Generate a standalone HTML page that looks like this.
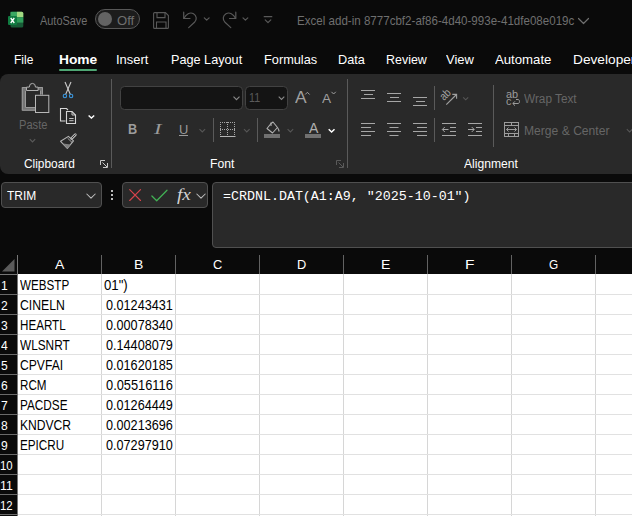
<!DOCTYPE html>
<html><head><meta charset="utf-8">
<style>
*{box-sizing:border-box;margin:0;padding:0}
html,body{width:632px;height:516px;overflow:hidden;background:#0a0a0a;font-family:"Liberation Sans",sans-serif}
#app{position:relative;width:632px;height:516px;overflow:hidden;background:#0a0a0a;color:#fff}
.a{position:absolute}
.t{position:absolute;white-space:pre;line-height:1;transform-origin:0 0}
svg{position:absolute;overflow:visible}
.sep{position:absolute;width:1px;background:#5a5a5a}
.hl{position:absolute;height:1px;left:0}
.vl{position:absolute;width:1px}
</style></head><body><div id="app">

<!-- ===== TITLE BAR ===== -->
<svg style="left:8px;top:11px" width="16" height="17" viewBox="0 0 16 17">
  <rect x="2.500" y="0.800" width="12.800" height="15.800" rx="1.500" fill="#185c37"/>
  <rect x="2.500" y="0.800" width="6.400" height="5.500" fill="#3aa862"/>
  <path d="M8.900 0.800h4.900a1.500 1.500 0 0 1 1.500 1.500V6.300h-6.400z" fill="#a3da82"/>
  <rect x="8.900" y="6.300" width="6.400" height="5.300" fill="#2f9e5a"/>
  <rect x="2.500" y="6.300" width="6.400" height="5.300" fill="#107c41"/>
  <rect x="0" y="5" width="9" height="9" rx="1" fill="#107c41"/>
  <path d="M2.700 7l3.600 5M6.300 7l-3.600 5" stroke="#fff" stroke-width="1.300"/>
</svg>
<div class="a" style="left:95px;top:9px;width:45px;height:20px;border:1px solid #585858;border-radius:10px;background:#1c1c1c"></div>
<div class="a" style="left:98px;top:12px;width:14px;height:14px;border-radius:7px;background:#636363"></div>
<!-- save -->
<svg style="left:153px;top:11.500px" width="17" height="17" viewBox="0 0 17 17" fill="none" stroke="#595959" stroke-width="1.1">
  <path d="M0.600 1.600a1 1 0 0 1 1-1h10.800l3 3v11.800a1 1 0 0 1-1 1H1.600a1 1 0 0 1-1-1z"/><path d="M4 0.600v5h8v-5"/><path d="M3.500 16.400v-6.400h9.500v6.400"/>
</svg>
<!-- undo -->
<svg style="left:183px;top:10px" width="28" height="19" viewBox="0 0 28 19" fill="none" stroke="#595959" stroke-width="1.2" stroke-linecap="round" stroke-linejoin="round">
  <path d="M0.700 2.200v6.300h6.300"/><path d="M1 8.200C3 4 7 1.800 10.500 3.700c3.300 1.900 3.600 6 1 8.600L5.700 17.600"/>
  <path d="M21.300 7.800l2.400 2.400 2.400-2.400"/>
</svg>
<!-- redo -->
<svg style="left:222px;top:10px" width="28" height="19" viewBox="0 0 28 19" fill="none" stroke="#595959" stroke-width="1.2" stroke-linecap="round" stroke-linejoin="round">
  <path d="M13.800 2.200v6.300H7.500"/><path d="M13.500 8.200C11.500 4 7.500 1.800 4 3.700c-3.300 1.900-3.600 6-1 8.600l5.800 5.300"/>
  <path d="M21 7.800l2.400 2.400 2.400-2.400"/>
</svg>
<!-- customize -->
<svg style="left:263px;top:15px" width="10" height="9" viewBox="0 0 10 9" fill="none" stroke="#595959" stroke-width="1.2" stroke-linecap="round" stroke-linejoin="round">
  <path d="M1.200 1.700h7.600"/><path d="M2.200 4.800l2.800 2.800 2.800-2.800"/>
</svg>
<svg style="left:576.500px;top:16.500px" width="13" height="8" viewBox="0 0 13 8" fill="none" stroke="#6f6f6f" stroke-width="1.2" stroke-linecap="round" stroke-linejoin="round"><path d="M1.500 1.500l5 5 5-5"/></svg>

<!-- ===== TABS ===== -->
<div class="a" style="left:59px;top:69px;width:38px;height:2px;background:#4fa774;border-radius:1px"></div>

<!-- ===== RIBBON ===== -->
<div class="a" style="left:0;top:74px;width:650px;height:100px;background:#292929;border-radius:8px 0 0 8px"></div>
<div class="sep" style="left:111px;top:79px;height:89px"></div>
<div class="sep" style="left:347px;top:79px;height:89px"></div>
<div class="sep" style="left:213px;top:118px;height:24px"></div>
<div class="sep" style="left:257px;top:118px;height:24px"></div>
<div class="sep" style="left:434px;top:86px;height:24px"></div>
<div class="sep" style="left:434px;top:118px;height:24px"></div>
<div class="sep" style="left:493px;top:85px;height:62px"></div>
<svg style="left:0;top:0" width="632" height="516" viewBox="0 0 632 516" fill="none" stroke-linecap="butt">
<!-- paste clipboard -->
<path d="M21.800 87H26.500V90.300H25.300V107.600H35V110.700H21.800z" fill="#757575"/>
<path d="M38 87H43V94.500H40.300V90.300H38z" fill="#757575"/>
<path d="M26.500 87.500H22.300V110.200H35M25.500 90.500V107.500H35M38 87.500H42.500V94.500M40.500 90.500V94.500" stroke="#9a9a9a" stroke-width="1"/>
<path d="M26.500 90.500V87.100H29.300A3.100 3.700 0 0 1 35.500 87.100H38.100V90.500z" fill="#2b2b2b" stroke="#b0b0b0" stroke-width="1"/>
<rect x="35.500" y="95.300" width="13.300" height="17.200" fill="#292929" stroke="#b8b8b8"/>
<path d="M29.800 139.200l2.700 2.700 2.700-2.700" stroke="#5a5a5a" stroke-width="1.200"/>
<!-- scissors -->
<g stroke="#c8c8c8" stroke-width="1.100">
  <path d="M65 82L70.300 94.300"/><path d="M71 82L65.700 94.300"/>
</g>
<circle cx="64.900" cy="96" r="1.700" stroke="#3a96dd" stroke-width="1.100"/>
<circle cx="71.100" cy="96" r="1.700" stroke="#3a96dd" stroke-width="1.100"/>
<!-- copy -->
<g stroke="#d6d6d6" stroke-width="1.100">
  <path d="M65.500 121H60.500V108.500H66.500L68 110"/>
  <path d="M66.500 111.500H72L75.500 115V123.500H66.500z"/>
  <path d="M72 111.500V115H75.500" stroke-width="0.900"/>
  <path d="M69.200 118.500H73.600M69.200 120.700H73.600" stroke-width="0.900"/>
</g>
<path d="M88.600 115.400l2.800 2.600 2.800-2.600" stroke="#ffffff" stroke-width="1.400"/>
<!-- format painter -->
<path d="M75.300 134.700L71.600 138.400" stroke="#b4b4b4" stroke-width="2.800" stroke-linecap="round"/>
<path d="M75.300 134.700L71.900 138.100" stroke="#292929" stroke-width="0.900" stroke-linecap="round"/>
<g stroke="#b4b4b4" stroke-width="1.100" stroke-linejoin="round">
  <path d="M68.400 136.400L60.600 141.300L67.300 148.400L73.500 140.900z"/>
  <path d="M62.800 143.600L67.300 148.400L70.600 144.400z" fill="#808080" stroke="none"/>
  <path d="M67.600 138.200L72 142.400" stroke-width="0.900"/>
</g>
<!-- launchers -->
<g stroke="#c8c8c8" stroke-width="1">
  <path d="M100.500 165V160.500H105"/><path d="M102.500 162.500L107 167M107.500 163V167.500H103"/>
</g>
<g stroke="#5a5a5a" stroke-width="1">
  <path d="M336.500 165V160.500H341"/><path d="M338.500 162.500L343 167M343.500 163V167.500H339"/>
</g>
<!-- font boxes -->
<rect x="120.500" y="86.500" width="122" height="23" rx="4" fill="#141414" stroke="#424242"/>
<rect x="245.500" y="86.500" width="42" height="23" rx="4" fill="#141414" stroke="#424242"/>
<path d="M233.500 96.700l3 3 3-3" stroke="#8a8a8a" stroke-width="1.100"/>
<path d="M278.700 96.700l2.800 2.800 2.800-2.800" stroke="#8a8a8a" stroke-width="1.100"/>
<!-- grow/shrink carets -->
<path d="M305.200 94.500l2.200-2.200 2.200 2.200" stroke="#a0a0a0" stroke-width="1"/>
<path d="M331.400 91.800l2.200 2.200 2.200-2.200" stroke="#a0a0a0" stroke-width="1"/>
<!-- U underline + chevrons -->
<path d="M179 135.500H188" stroke="#9a9a9a" stroke-width="1"/>
<path d="M199.500 129.200l2.800 2.800 2.800-2.800" stroke="#565656" stroke-width="1.100"/>
<!-- borders -->
<g stroke="#a8a8a8" stroke-width="1" stroke-dasharray="1 1">
  <path d="M220.500 122V135"/><path d="M227.500 122V135"/><path d="M234.500 122V135"/>
  <path d="M220 122.500H235"/><path d="M220 129.500H235"/>
</g>
<path d="M220 136.500H235.500" stroke="#b4b4b4" stroke-width="1"/>
<path d="M244 129.200l2.800 2.800 2.800-2.800" stroke="#565656" stroke-width="1.100"/>
<!-- fill bucket -->
<g stroke="#b0b0b0" stroke-width="1.100" stroke-linejoin="round">
  <path d="M271 123.500L267 128.500L272.500 133L277.500 127.500L273 122z"/>
  <path d="M271 126V122.500"/>
  <path d="M277.500 127.500C278.500 129 279 130 279 131.500"/>
</g>
<rect x="264" y="134" width="16" height="4" fill="#707070"/>
<path d="M287.600 129.200l2.800 2.800 2.800-2.800" stroke="#565656" stroke-width="1.100"/>
<rect x="305" y="134" width="16" height="4" fill="#707070"/>
<path d="M328.700 129.200l2.900 2.800 2.900-2.800" stroke="#ffffff" stroke-width="1.500"/>
<!-- alignment icons -->
<g stroke="#a6a6a6" stroke-width="1">
  <path d="M361 90.500H375M364 94.500H373M361 98.500H375"/>
  <path d="M387 93.500H401M390 97.500H399M387 101.500H401"/>
  <path d="M413 97.500H427M416 101.500H425M413 105.500H427"/>
  <path d="M361 123.500H375M361 127.500H371M361 131.500H375M361 135.500H371"/>
  <path d="M387 123.500H401M389.500 127.500H398.500M387 131.500H401M389.500 135.500H398.500"/>
  <path d="M413 123.500H427M417 127.500H427M413 131.500H427M417 135.500H427"/>
  <path d="M442 123.500H456M450 127.500H456M450 131.500H456M442 135.500H456"/>
  <path d="M442.500 129.500H448.500M444.800 127L442.300 129.500L444.800 132"/>
  <path d="M468 123.500H482M476 127.500H482M476 131.500H482M468 135.500H482"/>
  <path d="M468 129.500H474M471.700 127L474.200 129.500L471.700 132"/>
</g>
<!-- orientation -->
<g stroke="#a0a0a0" stroke-width="1.100">
  <path d="M446.300 104.700L456.500 94.500"/><path d="M452.300 94.400H456.600V98.700"/>
</g>
<path d="M463.200 97.300l2.500 2.500 2.500-2.500" stroke="#565656" stroke-width="1.100"/>
<!-- wrap text arrow -->
<g stroke="#9c9c9c" stroke-width="1">
  <path d="M516 99.500H518C520 99.500 520 103.500 518 103.500H513"/><path d="M515 101.300L512.800 103.500L515 105.700"/>
</g>
<!-- merge & center -->
<g stroke="#9c9c9c" stroke-width="1">
  <rect x="504.500" y="122.500" width="14" height="14"/>
  <path d="M504.500 125.500H518.500M504.500 133.500H518.500"/>
  <path d="M511.500 122.500V125.500M508.500 133.500V136.500M514.500 133.500V136.500"/>
  <path d="M506.500 129.500H516.500M508.500 127.500L506.500 129.500L508.500 131.500M514.500 127.500L516.500 129.500L514.500 131.500"/>
</g>
<path d="M626.800 129.200l2.800 2.800 2.800-2.800" stroke="#565656" stroke-width="1.100"/>
</svg>


<!-- ===== FORMULA BAR ===== -->
<div class="a" style="left:1px;top:182px;width:101px;height:26px;background:#292929;border:1px solid #505050;border-radius:4px"></div>
<svg style="left:86px;top:193px" width="10" height="7" viewBox="0 0 10 7" fill="none" stroke="#bdbdbd" stroke-width="1.050" stroke-linecap="round" stroke-linejoin="round"><path d="M0.800 1l4.200 4.200L9.200 1"/></svg>
<div class="a" style="left:111px;top:190px;width:2px;height:2px;background:#bdbdbd"></div>
<div class="a" style="left:111px;top:194px;width:2px;height:2px;background:#bdbdbd"></div>
<div class="a" style="left:111px;top:198px;width:2px;height:2px;background:#bdbdbd"></div>
<div class="a" style="left:122px;top:182px;width:86px;height:26px;background:#292929;border:1px solid #505050;border-radius:4px"></div>
<svg style="left:129px;top:189px" width="12" height="12" viewBox="0 0 12 12" fill="none" stroke="#d9434b" stroke-width="1.150" stroke-linecap="round"><path d="M0.700 0.700l10.800 10.800M11.500 0.700L0.700 11.500"/></svg>
<svg style="left:151px;top:189px" width="17" height="13" viewBox="0 0 17 13" fill="none" stroke="#42b155" stroke-width="1.250" stroke-linecap="round" stroke-linejoin="round"><path d="M0.900 7l4.800 4.800L16 1.200"/></svg>
<svg style="left:196px;top:193px" width="10" height="7" viewBox="0 0 10 7" fill="none" stroke="#bdbdbd" stroke-width="1.050" stroke-linecap="round" stroke-linejoin="round"><path d="M0.800 1l4.200 4.200L9.200 1"/></svg>
<div class="a" style="left:212px;top:182px;width:440px;height:66px;background:#292929;border:1px solid #505050;border-radius:4px"></div>

<!-- ===== GRID ===== -->
<div class="a" style="left:17px;top:274px;width:615px;height:242px;background:#fff"></div>
<div class="vl" style="left:101px;top:255px;height:19px;background:#626262"></div>
<div class="vl" style="left:101px;top:274px;height:242px;background:#d6d6d6"></div>
<div class="vl" style="left:175px;top:255px;height:19px;background:#626262"></div>
<div class="vl" style="left:175px;top:274px;height:242px;background:#d6d6d6"></div>
<div class="vl" style="left:259px;top:255px;height:19px;background:#626262"></div>
<div class="vl" style="left:259px;top:274px;height:242px;background:#d6d6d6"></div>
<div class="vl" style="left:343px;top:255px;height:19px;background:#626262"></div>
<div class="vl" style="left:343px;top:274px;height:242px;background:#d6d6d6"></div>
<div class="vl" style="left:427px;top:255px;height:19px;background:#626262"></div>
<div class="vl" style="left:427px;top:274px;height:242px;background:#d6d6d6"></div>
<div class="vl" style="left:511px;top:255px;height:19px;background:#626262"></div>
<div class="vl" style="left:511px;top:274px;height:242px;background:#d6d6d6"></div>
<div class="vl" style="left:595px;top:255px;height:19px;background:#626262"></div>
<div class="vl" style="left:595px;top:274px;height:242px;background:#d6d6d6"></div>
<div class="vl" style="left:17px;top:255px;height:261px;background:#767676"></div>
<div class="hl" style="top:274px;width:17px;background:#767676"></div>
<div class="hl" style="top:294px;width:17px;background:#6a6a6a"></div>
<div class="hl" style="top:294px;left:18px;width:614px;background:#e1e1e1"></div>
<div class="hl" style="top:314px;width:17px;background:#6a6a6a"></div>
<div class="hl" style="top:314px;left:18px;width:614px;background:#e1e1e1"></div>
<div class="hl" style="top:334px;width:17px;background:#6a6a6a"></div>
<div class="hl" style="top:334px;left:18px;width:614px;background:#e1e1e1"></div>
<div class="hl" style="top:354px;width:17px;background:#6a6a6a"></div>
<div class="hl" style="top:354px;left:18px;width:614px;background:#e1e1e1"></div>
<div class="hl" style="top:374px;width:17px;background:#6a6a6a"></div>
<div class="hl" style="top:374px;left:18px;width:614px;background:#e1e1e1"></div>
<div class="hl" style="top:394px;width:17px;background:#6a6a6a"></div>
<div class="hl" style="top:394px;left:18px;width:614px;background:#e1e1e1"></div>
<div class="hl" style="top:414px;width:17px;background:#6a6a6a"></div>
<div class="hl" style="top:414px;left:18px;width:614px;background:#e1e1e1"></div>
<div class="hl" style="top:434px;width:17px;background:#6a6a6a"></div>
<div class="hl" style="top:434px;left:18px;width:614px;background:#e1e1e1"></div>
<div class="hl" style="top:454px;width:17px;background:#6a6a6a"></div>
<div class="hl" style="top:454px;left:18px;width:614px;background:#e1e1e1"></div>
<div class="hl" style="top:474px;width:17px;background:#6a6a6a"></div>
<div class="hl" style="top:474px;left:18px;width:614px;background:#e1e1e1"></div>
<div class="hl" style="top:494px;width:17px;background:#6a6a6a"></div>
<div class="hl" style="top:494px;left:18px;width:614px;background:#e1e1e1"></div>
<div class="hl" style="top:514px;width:17px;background:#6a6a6a"></div>
<div class="hl" style="top:514px;left:18px;width:614px;background:#e1e1e1"></div>
<svg style="left:2px;top:259px" width="13" height="13" viewBox="0 0 13 13"><path d="M12.500 0v12.500H0z" fill="#5b5b5b"/></svg>

<span class="t" style="left:40.01px;top:14.00px;font-size:12.6px;line-height:14px;color:#6f6f6f;font-weight:normal;font-style:normal;font-family:'Liberation Sans',sans-serif;transform:scaleX(0.8674);">AutoSave</span>
<span class="t" style="left:117.23px;top:14.00px;font-size:12.6px;line-height:14px;color:#6f6f6f;font-weight:normal;font-style:normal;font-family:'Liberation Sans',sans-serif;transform:scaleX(1.0397);">Off</span>
<span class="t" style="left:296.59px;top:14.00px;font-size:12.6px;line-height:14px;color:#6f6f6f;font-weight:normal;font-style:normal;font-family:'Liberation Sans',sans-serif;transform:scaleX(0.9190);">Excel add-in 8777cbf2-af86-4d40-993e-41dfe08e019c</span>
<span class="t" style="left:13.79px;top:52.00px;font-size:13.2px;line-height:15px;color:#ffffff;font-weight:normal;font-style:normal;font-family:'Liberation Sans',sans-serif;transform:scaleX(0.9091);">File</span>
<span class="t" style="left:58.53px;top:52.00px;font-size:13.2px;line-height:15px;color:#ffffff;font-weight:bold;font-style:normal;font-family:'Liberation Sans',sans-serif;transform:scaleX(1.0436);">Home</span>
<span class="t" style="left:115.76px;top:52.00px;font-size:13.2px;line-height:15px;color:#ffffff;font-weight:normal;font-style:normal;font-family:'Liberation Sans',sans-serif;transform:scaleX(0.9818);">Insert</span>
<span class="t" style="left:170.57px;top:52.00px;font-size:13.2px;line-height:15px;color:#ffffff;font-weight:normal;font-style:normal;font-family:'Liberation Sans',sans-serif;transform:scaleX(0.9609);">Page Layout</span>
<span class="t" style="left:263.56px;top:52.00px;font-size:13.2px;line-height:15px;color:#ffffff;font-weight:normal;font-style:normal;font-family:'Liberation Sans',sans-serif;transform:scaleX(0.9673);">Formulas</span>
<span class="t" style="left:337.57px;top:52.00px;font-size:13.2px;line-height:15px;color:#ffffff;font-weight:normal;font-style:normal;font-family:'Liberation Sans',sans-serif;transform:scaleX(0.9644);">Data</span>
<span class="t" style="left:385.57px;top:52.00px;font-size:13.2px;line-height:15px;color:#ffffff;font-weight:normal;font-style:normal;font-family:'Liberation Sans',sans-serif;transform:scaleX(0.9445);">Review</span>
<span class="t" style="left:445.56px;top:52.00px;font-size:13.2px;line-height:15px;color:#ffffff;font-weight:normal;font-style:normal;font-family:'Liberation Sans',sans-serif;transform:scaleX(0.9833);">View</span>
<span class="t" style="left:494.55px;top:52.00px;font-size:13.2px;line-height:15px;color:#ffffff;font-weight:normal;font-style:normal;font-family:'Liberation Sans',sans-serif;transform:scaleX(0.9990);">Automate</span>
<span class="t" style="left:572.53px;top:52.00px;font-size:13.2px;line-height:15px;color:#ffffff;font-weight:normal;font-style:normal;font-family:'Liberation Sans',sans-serif;transform:scaleX(1.0384);">Developer</span>
<span class="t" style="left:19.00px;top:118.00px;font-size:12.5px;line-height:14px;color:#666666;font-weight:normal;font-style:normal;font-family:'Liberation Sans',sans-serif;transform:scaleX(0.8884);">Paste</span>
<span class="t" style="left:24.16px;top:157.00px;font-size:12.2px;line-height:14px;color:#ffffff;font-weight:normal;font-style:normal;font-family:'Liberation Sans',sans-serif;transform:scaleX(0.9752);">Clipboard</span>
<span class="t" style="left:210.05px;top:157.00px;font-size:12.2px;line-height:14px;color:#ffffff;font-weight:normal;font-style:normal;font-family:'Liberation Sans',sans-serif;transform:scaleX(1.0004);">Font</span>
<span class="t" style="left:463.55px;top:157.00px;font-size:12.2px;line-height:14px;color:#ffffff;font-weight:normal;font-style:normal;font-family:'Liberation Sans',sans-serif;transform:scaleX(0.9943);">Alignment</span>
<span class="t" style="left:248.80px;top:91.00px;font-size:12px;line-height:14px;color:#5a5a5a;font-weight:normal;font-style:normal;font-family:'Liberation Sans',sans-serif;transform:scaleX(0.8903);">11</span>
<span class="t" style="left:523.58px;top:92.00px;font-size:12.5px;line-height:14px;color:#666666;font-weight:normal;font-style:normal;font-family:'Liberation Sans',sans-serif;transform:scaleX(0.9433);">Wrap Text</span>
<span class="t" style="left:523.56px;top:124.00px;font-size:12.5px;line-height:14px;color:#666666;font-weight:normal;font-style:normal;font-family:'Liberation Sans',sans-serif;transform:scaleX(0.9687);">Merge &amp; Center</span>
<span class="t" style="left:127.86px;top:121.00px;font-size:14px;line-height:16px;color:#9c9c9c;font-weight:bold;font-style:normal;font-family:'Liberation Sans',sans-serif;transform:scaleX(0.9076);">B</span>
<span class="t" style="left:154.47px;top:121.00px;font-size:14.5px;line-height:16px;color:#9a9a9a;font-weight:normal;font-style:italic;font-family:'Liberation Serif',serif;transform:scaleX(1.5406);">I</span>
<span class="t" style="left:179.04px;top:122.00px;font-size:13.6px;line-height:15px;color:#9a9a9a;font-weight:normal;font-style:normal;font-family:'Liberation Sans',sans-serif;transform:scaleX(0.9480);">U</span>
<span class="t" style="left:7.09px;top:188.00px;font-size:13.2px;line-height:15px;color:#ffffff;font-weight:normal;font-style:normal;font-family:'Liberation Sans',sans-serif;transform:scaleX(0.9095);">TRIM</span>
<span class="t" style="left:222.75px;top:189.00px;font-size:13.4px;line-height:15px;color:#ffffff;font-weight:normal;font-style:normal;font-family:'Liberation Mono',monospace;transform:scaleX(0.9939);">=CRDNL.DAT(A1:A9, &quot;2025-10-01&quot;)</span>
<span class="t" style="left:54.82px;top:257.00px;font-size:13.2px;line-height:15px;color:#ffffff;font-weight:normal;font-style:normal;font-family:'Liberation Sans',sans-serif;transform:scaleX(1.0637);">A</span>
<span class="t" style="left:133.82px;top:257.00px;font-size:13.2px;line-height:15px;color:#ffffff;font-weight:normal;font-style:normal;font-family:'Liberation Sans',sans-serif;transform:scaleX(1.0637);">B</span>
<span class="t" style="left:212.86px;top:257.00px;font-size:13.2px;line-height:15px;color:#ffffff;font-weight:normal;font-style:normal;font-family:'Liberation Sans',sans-serif;transform:scaleX(0.9732);">C</span>
<span class="t" style="left:296.86px;top:257.00px;font-size:13.2px;line-height:15px;color:#ffffff;font-weight:normal;font-style:normal;font-family:'Liberation Sans',sans-serif;transform:scaleX(0.9732);">D</span>
<span class="t" style="left:380.82px;top:257.00px;font-size:13.2px;line-height:15px;color:#ffffff;font-weight:normal;font-style:normal;font-family:'Liberation Sans',sans-serif;transform:scaleX(1.0637);">E</span>
<span class="t" style="left:464.77px;top:257.00px;font-size:13.2px;line-height:15px;color:#ffffff;font-weight:normal;font-style:normal;font-family:'Liberation Sans',sans-serif;transform:scaleX(1.1728);">F</span>
<span class="t" style="left:548.90px;top:257.00px;font-size:13.2px;line-height:15px;color:#ffffff;font-weight:normal;font-style:normal;font-family:'Liberation Sans',sans-serif;transform:scaleX(0.8969);">G</span>
<span class="t" style="left:1.29px;top:278.00px;font-size:13.2px;line-height:15px;color:#ffffff;font-weight:normal;font-style:normal;font-family:'Liberation Sans',sans-serif;transform:scaleX(0.9156);">1</span>
<span class="t" style="left:1.29px;top:298.00px;font-size:13.2px;line-height:15px;color:#ffffff;font-weight:normal;font-style:normal;font-family:'Liberation Sans',sans-serif;transform:scaleX(0.9156);">2</span>
<span class="t" style="left:1.29px;top:318.00px;font-size:13.2px;line-height:15px;color:#ffffff;font-weight:normal;font-style:normal;font-family:'Liberation Sans',sans-serif;transform:scaleX(0.9156);">3</span>
<span class="t" style="left:1.29px;top:338.00px;font-size:13.2px;line-height:15px;color:#ffffff;font-weight:normal;font-style:normal;font-family:'Liberation Sans',sans-serif;transform:scaleX(0.9156);">4</span>
<span class="t" style="left:1.29px;top:358.00px;font-size:13.2px;line-height:15px;color:#ffffff;font-weight:normal;font-style:normal;font-family:'Liberation Sans',sans-serif;transform:scaleX(0.9156);">5</span>
<span class="t" style="left:1.29px;top:378.00px;font-size:13.2px;line-height:15px;color:#ffffff;font-weight:normal;font-style:normal;font-family:'Liberation Sans',sans-serif;transform:scaleX(0.9156);">6</span>
<span class="t" style="left:1.29px;top:398.00px;font-size:13.2px;line-height:15px;color:#ffffff;font-weight:normal;font-style:normal;font-family:'Liberation Sans',sans-serif;transform:scaleX(0.9156);">7</span>
<span class="t" style="left:1.29px;top:418.00px;font-size:13.2px;line-height:15px;color:#ffffff;font-weight:normal;font-style:normal;font-family:'Liberation Sans',sans-serif;transform:scaleX(0.9156);">8</span>
<span class="t" style="left:1.29px;top:438.00px;font-size:13.2px;line-height:15px;color:#ffffff;font-weight:normal;font-style:normal;font-family:'Liberation Sans',sans-serif;transform:scaleX(0.9156);">9</span>
<span class="t" style="left:-0.09px;top:458.00px;font-size:13.2px;line-height:15px;color:#ffffff;font-weight:normal;font-style:normal;font-family:'Liberation Sans',sans-serif;transform:scaleX(0.8641);">10</span>
<span class="t" style="left:-0.12px;top:478.00px;font-size:13.2px;line-height:15px;color:#ffffff;font-weight:normal;font-style:normal;font-family:'Liberation Sans',sans-serif;transform:scaleX(0.9295);">11</span>
<span class="t" style="left:-0.09px;top:498.00px;font-size:13.2px;line-height:15px;color:#ffffff;font-weight:normal;font-style:normal;font-family:'Liberation Sans',sans-serif;transform:scaleX(0.8641);">12</span>
<span class="t" style="left:19.83px;top:277.00px;font-size:14px;line-height:16px;color:#000;font-weight:normal;font-style:normal;font-family:'Liberation Sans',sans-serif;transform:scaleX(0.8313);">WEBSTP</span>
<span class="t" style="left:103.68px;top:277.00px;font-size:14px;line-height:16px;color:#000;font-weight:normal;font-style:normal;font-family:'Liberation Sans',sans-serif;transform:scaleX(0.9417);">01&quot;)</span>
<span class="t" style="left:19.81px;top:297.00px;font-size:14px;line-height:16px;color:#000;font-weight:normal;font-style:normal;font-family:'Liberation Sans',sans-serif;transform:scaleX(0.8740);">CINELN</span>
<span class="t" style="left:105.59px;top:297.00px;font-size:14px;line-height:16px;color:#000;font-weight:normal;font-style:normal;font-family:'Liberation Sans',sans-serif;transform:scaleX(0.9033);">0.01243431</span>
<span class="t" style="left:19.83px;top:317.00px;font-size:14px;line-height:16px;color:#000;font-weight:normal;font-style:normal;font-family:'Liberation Sans',sans-serif;transform:scaleX(0.8302);">HEARTL</span>
<span class="t" style="left:105.59px;top:317.00px;font-size:14px;line-height:16px;color:#000;font-weight:normal;font-style:normal;font-family:'Liberation Sans',sans-serif;transform:scaleX(0.9033);">0.00078340</span>
<span class="t" style="left:19.82px;top:337.00px;font-size:14px;line-height:16px;color:#000;font-weight:normal;font-style:normal;font-family:'Liberation Sans',sans-serif;transform:scaleX(0.8437);">WLSNRT</span>
<span class="t" style="left:105.59px;top:337.00px;font-size:14px;line-height:16px;color:#000;font-weight:normal;font-style:normal;font-family:'Liberation Sans',sans-serif;transform:scaleX(0.9033);">0.14408079</span>
<span class="t" style="left:19.81px;top:357.00px;font-size:14px;line-height:16px;color:#000;font-weight:normal;font-style:normal;font-family:'Liberation Sans',sans-serif;transform:scaleX(0.8651);">CPVFAI</span>
<span class="t" style="left:105.59px;top:357.00px;font-size:14px;line-height:16px;color:#000;font-weight:normal;font-style:normal;font-family:'Liberation Sans',sans-serif;transform:scaleX(0.9033);">0.01620185</span>
<span class="t" style="left:19.83px;top:377.00px;font-size:14px;line-height:16px;color:#000;font-weight:normal;font-style:normal;font-family:'Liberation Sans',sans-serif;transform:scaleX(0.8325);">RCM</span>
<span class="t" style="left:105.59px;top:377.00px;font-size:14px;line-height:16px;color:#000;font-weight:normal;font-style:normal;font-family:'Liberation Sans',sans-serif;transform:scaleX(0.9162);">0.05516116</span>
<span class="t" style="left:19.82px;top:397.00px;font-size:14px;line-height:16px;color:#000;font-weight:normal;font-style:normal;font-family:'Liberation Sans',sans-serif;transform:scaleX(0.8410);">PACDSE</span>
<span class="t" style="left:105.59px;top:397.00px;font-size:14px;line-height:16px;color:#000;font-weight:normal;font-style:normal;font-family:'Liberation Sans',sans-serif;transform:scaleX(0.9033);">0.01264449</span>
<span class="t" style="left:19.81px;top:417.00px;font-size:14px;line-height:16px;color:#000;font-weight:normal;font-style:normal;font-family:'Liberation Sans',sans-serif;transform:scaleX(0.8639);">KNDVCR</span>
<span class="t" style="left:105.59px;top:417.00px;font-size:14px;line-height:16px;color:#000;font-weight:normal;font-style:normal;font-family:'Liberation Sans',sans-serif;transform:scaleX(0.9033);">0.00213696</span>
<span class="t" style="left:19.82px;top:437.00px;font-size:14px;line-height:16px;color:#000;font-weight:normal;font-style:normal;font-family:'Liberation Sans',sans-serif;transform:scaleX(0.8364);">EPICRU</span>
<span class="t" style="left:105.59px;top:437.00px;font-size:14px;line-height:16px;color:#000;font-weight:normal;font-style:normal;font-family:'Liberation Sans',sans-serif;transform:scaleX(0.9033);">0.07297910</span>
<span class="t" style="left:295.10px;top:88.00px;font-size:17px;line-height:19px;color:#a0a0a0;font-weight:normal;font-style:normal;font-family:'Liberation Sans',sans-serif;transform:scaleX(1.0230);">A</span>
<span class="t" style="left:322.30px;top:91.00px;font-size:13.4px;line-height:15px;color:#a0a0a0;font-weight:normal;font-style:normal;font-family:'Liberation Sans',sans-serif;transform:scaleX(1.0186);">A</span>
<span class="t" style="left:308.60px;top:120.00px;font-size:14.5px;line-height:16px;color:#b0b0b0;font-weight:normal;font-style:normal;font-family:'Liberation Sans',sans-serif;transform:scaleX(0.9713);">A</span>
<span class="t" style="left:505.83px;top:88.00px;font-size:10.5px;line-height:12px;color:#9c9c9c;font-weight:normal;font-style:normal;font-family:'Liberation Sans',sans-serif;transform:scaleX(1.0382);">ab</span>
<span class="t" style="left:506.03px;top:95.00px;font-size:10.5px;line-height:12px;color:#9c9c9c;font-weight:normal;font-style:normal;font-family:'Liberation Sans',sans-serif;transform:scaleX(1.0345);">c</span>
<span class="t" style="left:444.30px;top:91.30px;font-size:11.5px;line-height:12px;color:#a0a0a0;font-weight:normal;font-style:normal;font-family:'Liberation Sans',sans-serif;transform:rotate(-45deg) scaleX(0.8440);transform-origin:0 10px;">ab</span>
<span class="t" style="left:176.72px;top:185.00px;font-size:17px;line-height:19px;color:#d2d2d2;font-weight:normal;font-style:italic;font-family:'Liberation Serif',serif;transform:scaleX(1.1374);">fx</span>
</div></body></html>
